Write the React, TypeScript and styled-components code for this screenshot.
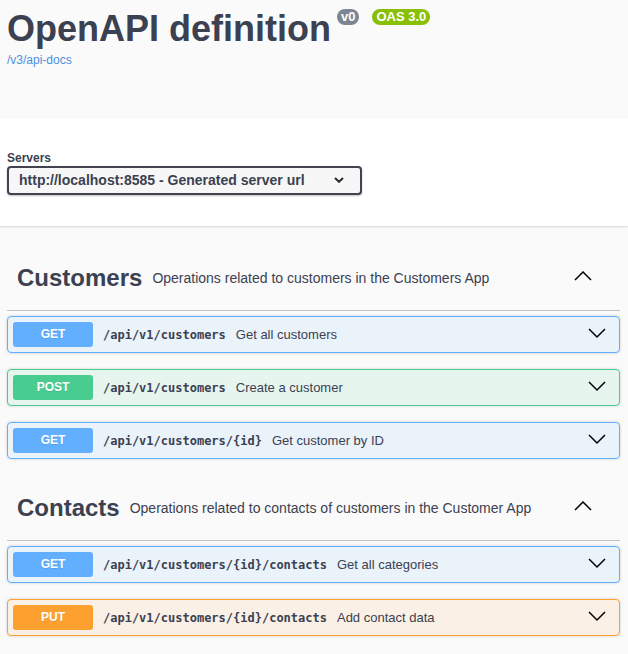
import React from 'react';
import styled, { createGlobalStyle } from 'styled-components';

const GlobalStyle = createGlobalStyle`
  html, body {
    margin: 0;
    padding: 0;
    background: #fafafa;
  }
  body {
    font-family: "Liberation Sans", Arial, sans-serif;
    color: #3b4151;
  }
  *, *::before, *::after {
    box-sizing: border-box;
  }
`;

type Method = 'GET' | 'POST' | 'PUT';

const methodColors: Record<Method, { solid: string; bg: string }> = {
  GET: { solid: '#61affe', bg: 'rgba(97, 175, 254, 0.1)' },
  POST: { solid: '#49cc90', bg: 'rgba(73, 204, 144, 0.1)' },
  PUT: { solid: '#fca130', bg: 'rgba(252, 161, 48, 0.1)' },
};

const Page = styled.div`
  width: 100%;
`;

const InfoSection = styled.header`
  height: 118px;
  padding: 9px 8px 0 7px;
`;

const TitleRow = styled.div`
  display: flex;
  align-items: flex-start;
`;

const Title = styled.h2`
  margin: 2px 0 0 0;
  font-size: 36px;
  line-height: 36px;
  font-weight: 700;
  color: #3b4151;
`;

const Stamp = styled.span<{ $bg: string; $gap: number }>`
  display: inline-block;
  margin-left: ${(p) => p.$gap}px;
  padding: 1px 4px;
  border-radius: 57px;
  background: ${(p) => p.$bg};
  color: #fff;
  font-size: 13px;
  line-height: 14px;
  font-weight: 700;
`;

const DocsLink = styled.a`
  display: inline-block;
  margin-top: 6px;
  font-size: 12px;
  line-height: 14px;
  color: #4990e2;
  text-decoration: none;
`;

const SchemeContainer = styled.section`
  height: 108px;
  background: #fff;
  box-shadow: 0 1px 2px 0 rgba(0, 0, 0, 0.15);
  padding: 33px 8px 0 7px;
`;

const ServersLabel = styled.div`
  font-size: 12px;
  line-height: 14px;
  font-weight: 700;
  color: #3b4151;
`;

const ServerSelect = styled.button`
  display: flex;
  align-items: center;
  justify-content: space-between;
  width: 355px;
  margin-top: 1px;
  padding: 4px 16px 5px 10px;
  border: 2px solid #41444e;
  border-radius: 4px;
  background: #f7f7f7;
  box-shadow: 0 1px 2px 0 rgba(0, 0, 0, 0.25);
  font-family: "Liberation Sans", Arial, sans-serif;
  font-size: 14px;
  line-height: 16px;
  font-weight: 700;
  color: #3b4151;
  text-align: left;
`;

const Operations = styled.main`
  padding: 19px 8px 0 7px;
`;

const TagSection = styled.section`
  display: flex;
  flex-direction: column;
`;

const TagHeading = styled.h3`
  display: flex;
  align-items: center;
  min-height: 66px;
  margin: 0 0 5px 0;
  padding: 10px 20px 10px 10px;
  border-bottom: 1px solid rgba(59, 65, 81, 0.3);
  font-weight: 400;
`;

const TagName = styled.span`
  font-size: 24px;
  line-height: 28px;
  font-weight: 700;
  color: #3b4151;
`;

const TagDescription = styled.small`
  flex: 1;
  padding: 0 10px;
  font-size: 14px;
  line-height: 16px;
  font-weight: 400;
  color: #3b4151;
`;

const Caret = styled.svg<{ $right: number }>`
  flex: none;
  margin-right: ${(p) => p.$right}px;
`;

const OpBlock = styled.div<{ $method: Method }>`
  margin: 0 0 16px 0;
  border: 1px solid ${(p) => methodColors[p.$method].solid};
  border-radius: 4px;
  background: ${(p) => methodColors[p.$method].bg};
  box-shadow: 0 0 3px rgba(0, 0, 0, 0.19);
`;

const OpSummary = styled.div`
  display: flex;
  align-items: center;
  min-height: 35px;
  padding: 5px;
`;

const MethodBadge = styled.span<{ $method: Method }>`
  flex: none;
  width: 80px;
  padding: 6px 0;
  border-radius: 3px;
  background: ${(p) => methodColors[p.$method].solid};
  color: #fff;
  font-size: 12px;
  line-height: 13px;
  font-weight: 700;
  text-align: center;
  text-shadow: 0 1px 0 rgba(0, 0, 0, 0.1);
`;

const OpPath = styled.span`
  padding: 0 10px;
  font-family: "DejaVu Sans Mono", "Liberation Mono", monospace;
  font-size: 12px;
  font-weight: 700;
  color: #3b4151;
  white-space: nowrap;
`;

const OpDescription = styled.span`
  flex: 1;
  font-size: 13px;
  color: #3b4151;
`;

const ChevronDown = () => (
  <Caret $right={8} width="18" height="14" viewBox="0 0 18 14" aria-hidden="true">
    <polyline points="1,1 9,9 17,1" fill="none" stroke="#000" strokeWidth="1.5" />
  </Caret>
);

const ChevronUp = () => (
  <Caret $right={8} width="18" height="13" viewBox="0 0 18 13" aria-hidden="true">
    <polyline points="1,9 9,1 17,9" fill="none" stroke="#000" strokeWidth="1.5" />
  </Caret>
);

const SelectArrow = () => (
  <svg width="10" height="6" viewBox="0 0 10 6" aria-hidden="true">
    <polyline points="1,1 5,4.8 9,1" fill="none" stroke="#2b2b2b" strokeWidth="2" />
  </svg>
);

type Op = { method: Method; path: string; summary: string };

const tags: { name: string; description: string; ops: Op[] }[] = [
  {
    name: 'Customers',
    description: 'Operations related to customers in the Customers App',
    ops: [
      { method: 'GET', path: '/api/v1/customers', summary: 'Get all customers' },
      { method: 'POST', path: '/api/v1/customers', summary: 'Create a customer' },
      { method: 'GET', path: '/api/v1/customers/{id}', summary: 'Get customer by ID' },
    ],
  },
  {
    name: 'Contacts',
    description: 'Operations related to contacts of customers in the Customer App',
    ops: [
      { method: 'GET', path: '/api/v1/customers/{id}/contacts', summary: 'Get all categories' },
      { method: 'PUT', path: '/api/v1/customers/{id}/contacts', summary: 'Add contact data' },
    ],
  },
];

export default function App() {
  return (
    <Page>
      <GlobalStyle />
      <InfoSection>
        <TitleRow>
          <Title>OpenAPI definition</Title>
          <Stamp $bg="#7d8492" $gap={6}>v0</Stamp>
          <Stamp $bg="#89bf04" $gap={13}>OAS 3.0</Stamp>
        </TitleRow>
        <DocsLink href="#">/v3/api-docs</DocsLink>
      </InfoSection>
      <SchemeContainer>
        <ServersLabel>Servers</ServersLabel>
        <ServerSelect type="button">
          <span>http://localhost:8585 - Generated server url</span>
          <SelectArrow />
        </ServerSelect>
      </SchemeContainer>
      <Operations>
        {tags.map((tag) => (
          <TagSection key={tag.name}>
            <TagHeading>
              <TagName>{tag.name}</TagName>
              <TagDescription>{tag.description}</TagDescription>
              <ChevronUp />
            </TagHeading>
            {tag.ops.map((op, i) => (
              <OpBlock key={i} $method={op.method}>
                <OpSummary>
                  <MethodBadge $method={op.method}>{op.method}</MethodBadge>
                  <OpPath>{op.path}</OpPath>
                  <OpDescription>{op.summary}</OpDescription>
                  <ChevronDown />
                </OpSummary>
              </OpBlock>
            ))}
          </TagSection>
        ))}
      </Operations>
    </Page>
  );
}
